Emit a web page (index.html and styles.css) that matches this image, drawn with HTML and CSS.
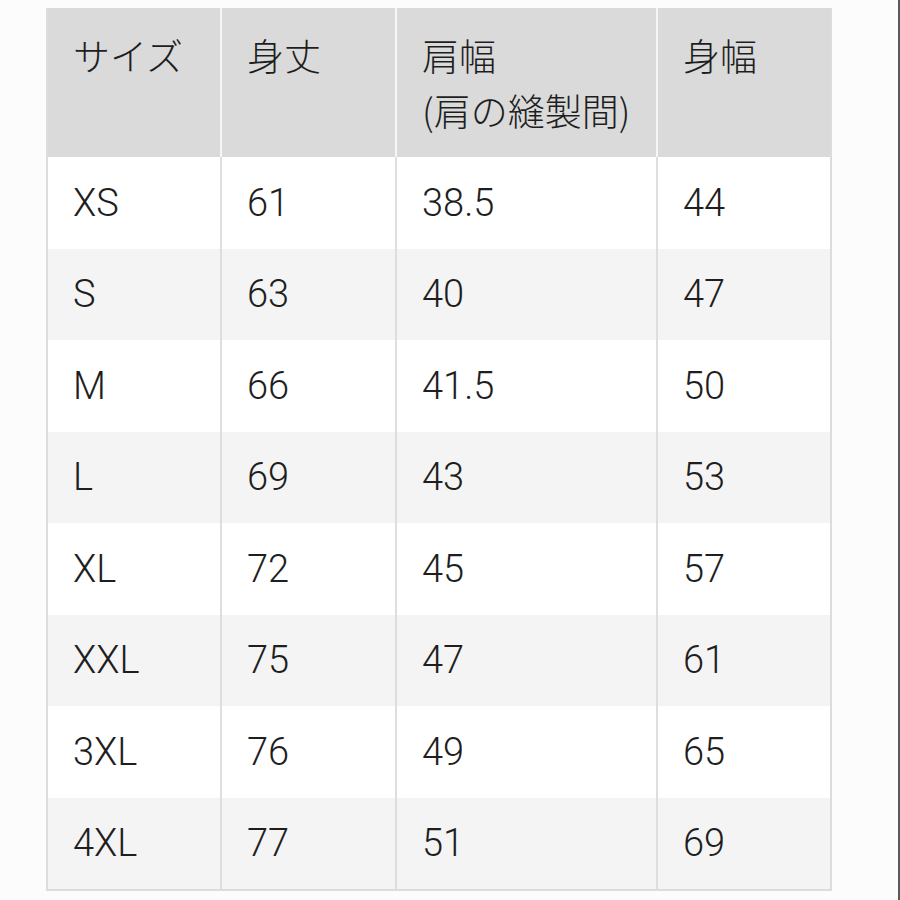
FILE: index.html
```html
<!DOCTYPE html>
<html lang="ja">
<head>
<meta charset="utf-8">
<link rel="stylesheet" href="styles.css">
</head>
<body>
<div class="page">
<table class="size-table">
  <colgroup>
    <col class="c1"><col class="c2"><col class="c3"><col class="c4">
  </colgroup>
  <thead>
    <tr>
      <th>サイズ</th>
      <th>身丈</th>
      <th>肩幅<br>(肩の縫製間)</th>
      <th>身幅</th>
    </tr>
  </thead>
  <tbody>
    <tr><td>XS</td><td>61</td><td>38.5</td><td>44</td></tr>
    <tr><td>S</td><td>63</td><td>40</td><td>47</td></tr>
    <tr><td>M</td><td>66</td><td>41.5</td><td>50</td></tr>
    <tr><td>L</td><td>69</td><td>43</td><td>53</td></tr>
    <tr><td>XL</td><td>72</td><td>45</td><td>57</td></tr>
    <tr><td>XXL</td><td>75</td><td>47</td><td>61</td></tr>
    <tr><td>3XL</td><td>76</td><td>49</td><td>65</td></tr>
    <tr><td>4XL</td><td>77</td><td>51</td><td>69</td></tr>
  </tbody>
</table>
</div>
</body>
</html>
```

FILE: styles.css
```css
html, body {
  margin: 0;
  padding: 0;
  background: #fcfcfc;
}
.page {
  box-sizing: border-box;
  width: 900px;
  height: 900px;
  padding: 8px 0 0 46px;
  border-right: 2px solid #5a5a5a;
}
.size-table {
  border-collapse: separate;
  border-spacing: 0;
  table-layout: fixed;
  width: 786px;
  border: 2px solid #dcdcdc;
  border-top: none;
  font-family: Roboto, "Noto Sans CJK JP", sans-serif;
  font-weight: 300;
  font-size: 38px;
  color: #1e1e1e;
}
.c1 { width: 172px; }
.c2 { width: 175px; }
.c3 { width: 261px; }
.c4 { width: 174px; }
.size-table th {
  background: #dadada;
  text-align: left;
  vertical-align: top;
  height: 149px;
  box-sizing: border-box;
  padding: 20px 10px 0 25px;
  line-height: 55px;
  border-left: 2px solid #f6f6f6;
  font-family: "Noto Sans CJK JP", sans-serif;
  font-size: 37px;
  font-weight: 300;
}
.size-table th:first-child,
.size-table td:first-child {
  border-left: none;
}
.size-table td {
  height: 91.5px;
  box-sizing: border-box;
  padding: 0 10px 0 25px;
  vertical-align: middle;
  border-left: 2px solid #dedede;
  line-height: 1;
}
.size-table tbody tr:nth-child(odd) td { background: #ffffff; }
.size-table tbody tr:nth-child(even) td { background: #f4f4f4; }
```
